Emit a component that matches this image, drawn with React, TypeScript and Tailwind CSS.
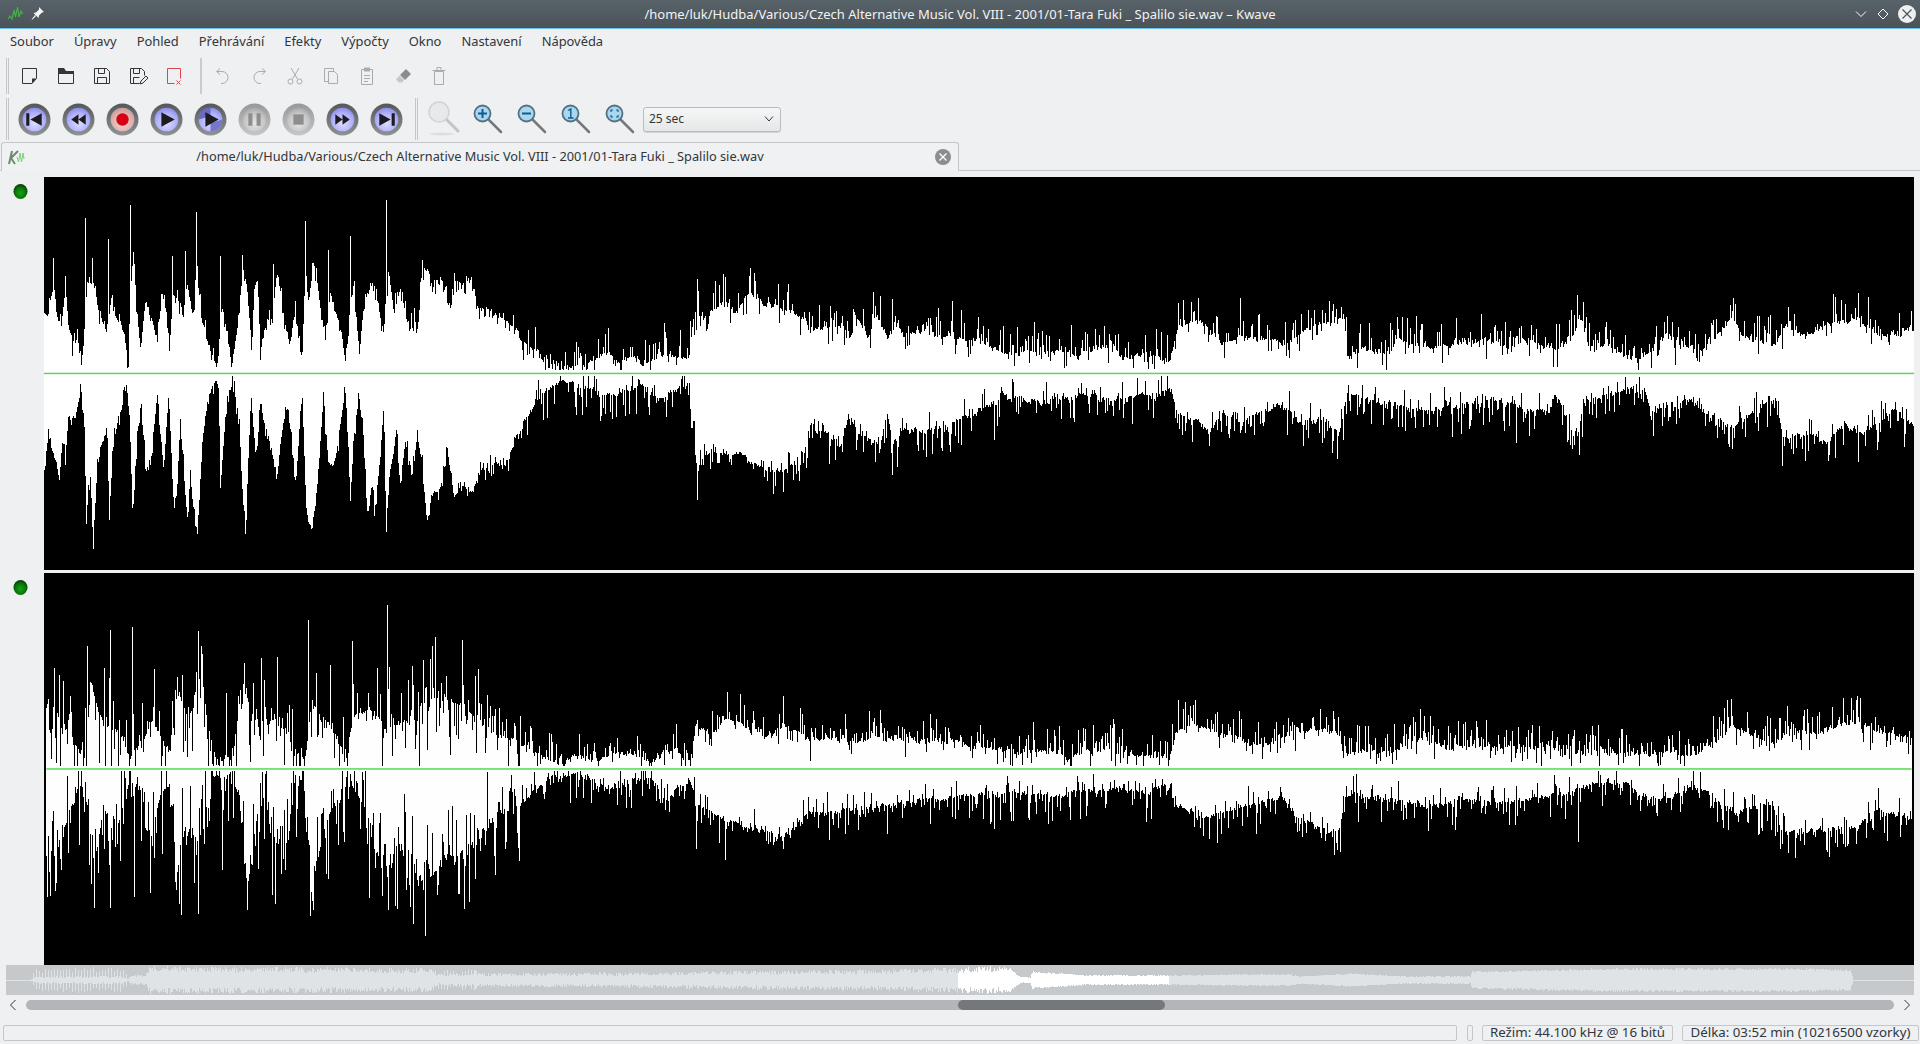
import { useMemo } from "react";

// waveform outline, measured from the picture: x, y pairs per crop
type Crop = { x0: number; sx: number; c: number };
const Z7: Crop = { x0: 0, sx: 1 / 3, c: 608 };
const Z9: Crop = { x0: 400, sx: 760 / 1568, c: 400 };
const Z10: Crop = { x0: 1160, sx: 760 / 1568, c: 400 };
const Z11: Crop = { x0: 0, sx: 960 / 1568, c: 538 };
const Z12: Crop = { x0: 960, sx: 960 / 1568, c: 387 };

const to = (z: Crop, p: number[]) => {
  const out: [number, number][] = [];
  for (let i = 0; i < p.length; i += 2) out.push([z.x0 + p[i] * z.sx, Math.abs(z.c - p[i + 1]) / 3]);
  return out;
};

const ch1Top = [
  ...to(Z7, [132,425,145,430,160,340,170,440,185,470,195,340,205,470,218,530,230,495,245,575,252,470,262,360,275,330,295,420,318,490,330,400,350,440,370,490,384,580,392,300,400,230,408,410,420,530,435,400,447,420,470,500,490,350,508,555,515,370,535,390,545,450,560,340,578,440,590,300,600,400,620,510,640,570,652,585,665,400,680,490,695,580,712,470,728,300,740,350,755,530,762,350,772,330,780,530,800,450,815,450,830,300,850,440,868,520,885,420,905,575,915,300,925,400,940,280,950,350,975,500,990,370,1020,470,1035,570,1050,400,1060,340,1077,555,1090,400,1120,340,1150,490,1165,310,1180,430,1200,350,1220,460,1255,450,1265,290,1285,300,1305,370,1320,320,1350,420,1362,320,1395,370,1400,300,1425,360,1438,440]),
  ...to(Z9, [165,210,200,220,240,270,270,320,280,350,320,360,350,370,380,370,420,330,450,360,480,340,500,365,530,340,560,345,595,350,605,230,625,225,650,200,670,170,690,215,720,150,760,195,800,200,835,225,845,270,880,255,915,250,925,290,945,230,965,280,980,210,1005,290,1020,230,1040,275,1100,270,1130,290,1180,290,1215,310,1250,335,1300,330,1350,330,1400,335,1470,300,1490,350,1540,330,1568,345]),
  ...to(Z10, [20,355,35,270,70,240,100,255,125,310,170,285,220,290,260,310,300,260,350,235,380,235,385,340,420,320,470,335,490,285,540,310,580,310,620,300,670,290,720,320,760,290,810,330,850,290,865,230,885,320,930,310,960,345,1000,340,1050,260,1060,320,1120,320,1140,290,1180,220,1200,280,1270,310,1290,250,1330,280,1380,250,1440,230,1480,280,1510,280,1555,260]),
];
const ch1Bottom = [
  ...to(Z7, [132,910,142,800,165,870,178,910,187,800,195,870,205,730,225,750,243,650,252,770,258,1030,270,930,278,1135,290,900,305,810,320,760,327,1050,335,850,355,750,380,640,390,800,398,1060,405,850,420,690,435,850,450,900,470,670,490,900,505,660,520,1020,530,960,540,750,560,1050,570,920,590,1110,605,820,620,700,640,640,655,640,660,950,675,740,695,640,715,730,730,1040,737,1110,745,830,752,680,768,880,780,700,800,780,830,920,845,780,862,690,887,940,905,650,918,1020,935,1075,950,950,970,680,985,890,1005,860,1020,770,1035,655,1050,990,1060,800,1075,660,1090,820,1100,1040,1115,940,1122,1040,1140,850,1150,700,1157,1065,1170,900,1190,770,1198,960,1215,810,1235,910,1250,790,1265,870,1280,1060,1295,970,1320,950,1340,840,1362,980,1380,940,1400,950,1420,960,1438,910]),
  ...to(Z9, [180,680,220,670,240,590,270,520,285,480,320,440,350,430,380,450,420,480,450,470,500,440,540,490,560,470,590,450,605,540,612,700,640,640,670,660,700,650,740,690,770,700,805,690,835,640,845,560,880,590,910,630,925,530,950,600,990,620,1005,530,1015,620,1040,580,1100,580,1150,550,1200,520,1230,500,1240,470,1300,490,1350,490,1400,470,1470,490,1530,470,1568,470]),
  ...to(Z10, [22,450,35,540,60,540,100,580,130,530,170,550,210,530,250,500,290,560,330,540,370,590,385,470,430,490,500,510,560,520,610,510,650,500,700,490,740,510,800,530,815,470,860,600,875,490,920,480,960,450,1000,460,1010,520,1060,500,1090,490,1130,530,1180,570,1230,520,1270,490,1285,600,1330,590,1375,620,1410,560,1440,590,1500,540,1515,510,1555,570]),
];
const ch2Top = [
  ...to(Z11, [72,340,95,390,115,470,135,505,145,290,165,400,190,430,208,505,225,470,245,390,272,490,285,320,305,380,325,240,340,480,358,510,380,490,395,300,420,420,450,380,470,460,495,505,505,330,530,400,560,490,575,380,600,360,625,410,660,400,690,340,720,320,750,340,790,410,820,440,860,460,885,495,915,510,935,490,975,500,1000,480,1030,490,1060,510,1085,470,1125,505,1135,400,1160,420,1190,380,1250,430,1280,400,1320,440,1380,450,1430,440,1500,445,1568,450]),
  ...to(Z12, [50,320,100,330,150,320,175,350,210,320,250,330,300,340,345,340,352,270,385,240,420,270,440,280,480,310,520,290,570,260,625,270,633,330,700,325,760,280,800,320,860,310,910,310,960,310,1000,340,1050,320,1090,340,1150,330,1200,340,1240,290,1260,250,1310,290,1335,310,1350,280,1420,260,1465,230,1500,270,1555,280]),
];
const ch2Bottom = [
  ...to(Z11, [72,770,85,800,100,740,118,620,133,575,150,830,165,660,190,700,208,570,225,600,240,780,258,620,273,585,285,850,300,700,320,760,345,570,375,570,390,640,400,900,420,620,450,780,470,590,492,580,505,870,530,690,565,580,590,650,610,790,630,800,660,750,690,900,720,810,760,780,810,680,860,630,885,590,915,570,960,570,990,610,1060,570,1085,640,1125,580,1135,650,1180,700,1240,730,1280,750,1320,680,1400,670,1480,650,1568,630]),
  ...to(Z12, [50,470,100,470,150,480,200,460,250,455,300,470,345,440,355,510,400,550,440,520,480,510,530,480,555,550,620,590,632,470,700,490,760,510,820,490,900,500,1000,470,1030,440,1090,435,1115,480,1160,490,1200,450,1250,500,1270,530,1330,500,1345,590,1410,580,1470,570,1500,520,1555,550]),
];

const spikes = {
  ch1Top: [
    ...to(Z7, [160,262,255,142,275,262,325,205,391,105,517,258,556,243,589,126,660,258,727,255,820,280,916,153,985,240,1051,198,1157,90]),
    ...to(Z9, [45,70,544,250,612,118,670,112,722,85,975,157,1015,178,1138,183]),
    ...to(Z10, [38,190,78,175,166,175,861,165,1182,175,1392,172]),
  ],
  ch1Bottom: [
    ...to(Z9, [55,810,612,780,770,740,1015,705,1225,600]),
    ...to(Z10, [102,618,354,640,735,610,865,645,1180,628,1283,678,1378,665,1441,668]),
  ],
  ch2Top: [
    ...to(Z11, [85,235,139,170,177,120,212,112,320,124,396,220,499,90,536,225,572,155,629,45,689,210,727,260,1279,320]),
    ...to(Z12, [120,247,250,238,357,180,386,180,760,228,1262,178,1428,200,1467,180]),
  ],
  ch2Bottom: [
    ...to(Z11, [151,958,177,958,216,925,283,880,320,975,360,845,400,945,505,910,630,965,690,905,1135,780,1182,815,1279,780]),
    ...to(Z12, [55,570,150,545,205,530,408,600,622,610,1013,610,1342,630,1417,610]),
  ],
};

const lerp = (pts: [number, number][], x: number) => {
  if (x <= pts[0][0]) return pts[0][1];
  for (let i = 1; i < pts.length; i++) {
    if (x <= pts[i][0]) {
      const [x0, y0] = pts[i - 1];
      const [x1, y1] = pts[i];
      return y0 + ((y1 - y0) * (x - x0)) / (x1 - x0 || 1);
    }
  }
  return pts[pts.length - 1][1];
};

function rng(seed: number) {
  let s = seed;
  return () => {
    s = (s * 1664525 + 1013904223) >>> 0;
    return s / 4294967296;
  };
}

function wavePath(
  top: [number, number][],
  bottom: [number, number][],
  topSpikes: [number, number][],
  bottomSpikes: [number, number][],
  center: number,
  seed: number,
  earlyNoise: number,
) {
  const rand = rng(seed);
  const tops = new Map(topSpikes.map(([x, a]) => [Math.round(x), a]));
  const bots = new Map(bottomSpikes.map(([x, a]) => [Math.round(x), a]));
  let walkT = 0;
  let walkB = 0;
  const side = (x: number, env: [number, number][], s: Map<number, number>, walk: number) => {
    const early = x < 520;
    let a = lerp(env, x) + walk;
    if (early) {
      a += Math.pow(rand(), 6) * earlyNoise - Math.pow(rand(), 6) * earlyNoise * 0.9;
    } else {
      a += Math.pow(rand(), 6) * 30 - Math.pow(rand(), 10) * 20 - 3;
    }
    const sp = s.get(x);
    if (sp) a = Math.max(a, sp);
    return Math.max(3, a);
  };
  let d = "";
  for (let x = 44; x < 1914; x++) {
    walkT = walkT * 0.72 + (rand() - 0.5) * 3.5;
    walkB = walkB * 0.72 + (rand() - 0.5) * 3.5;
    const t = side(x, top, tops, walkT);
    const b = side(x, bottom, bots, walkB);
    d += `M${x - 44 + 0.5} ${Math.round(center - t)}V${Math.round(center + b)}`;
  }
  return d;
}

const overviewEnv: [number, number][] = [
  [0,1],[30,1],[35,12],[120,14],[128,5],[145,5],[149,14],[300,13],[430,12],[435,10],[475,11],[478,7],[640,8],[700,9],[800,10],[880,11],[958,13],[990,14],[1010,12],[1020,3],[1030,3],[1032,9],[1060,7],[1090,5],[1170,5],[1250,6],[1290,6],[1300,4],[1350,7],[1400,4],[1470,4],[1472,9],[1520,10],[1600,12],[1800,12],[1850,11],[1853,1],[1914,1],
];

function overviewPath(from: number, to_: number) {
  const rand = rng(77);
  let d = "";
  for (let x = 6; x < 1914; x++) {
    const env = lerp(overviewEnv, x);
    const comb = x < 130 ? (x % 3 === 0 ? 1 : 0.3) : x > 433 && x < 475 ? (x % 3 === 0 ? 1 : 0.6) : 1;
    const rag = x < 1000 ? 0.45 : 0.2;
    const thin = env <= 1.5;
    const t = thin ? 0.5 : env * comb * (1 - rag + rag * rand());
    const b = thin ? 0.5 : env * comb * (1 - rag + rag * rand());
    if (x >= from && x < to_) d += `M${x - 6 + 0.5} ${(15 - t).toFixed(1)}V${(15 + b).toFixed(1)}`;
  }
  return d;
}

function Channel({ d }: { d: string }) {
  return (
    <svg width="1870" height="100%" viewBox="0 0 1870 393" className="block h-full">
      <path d={d} stroke="#fff" strokeWidth="1" shapeRendering="crispEdges" fill="none" />
      <rect x="0" y="195.700" width="1870" height="1.500" fill="#58d858" />
    </svg>
  );
}

function Led() {
  return (
    <svg width="15" height="15" viewBox="0 0 15 15">
      <defs>
        <radialGradient id="led" cx="50%" cy="60%" r="60%">
          <stop offset="0" stopColor="#14a414" />
          <stop offset="0.6" stopColor="#0a760a" />
          <stop offset="1" stopColor="#053605" />
        </radialGradient>
      </defs>
      <ellipse cx="7.500" cy="7.500" rx="7" ry="7.500" fill="url(#led)" />
    </svg>
  );
}

const ink = "#31363b";
const off = "#a9acae";

function Ico({ children }: { children: React.ReactNode }) {
  return (
    <div className="flex h-9 w-9 items-center justify-center">
      <svg width="20" height="20" viewBox="0 0 20 20" fill="none" strokeWidth="1">
        {children}
      </svg>
    </div>
  );
}

function Floppy() {
  return (
    <>
      <path d="M2.500 2.500h12l3 3v12h-15z" stroke={ink} />
      <path d="M6.500 2.500v5h6v-5M5.500 17.500v-6h9v6" stroke={ink} />
    </>
  );
}

function MainBar() {
  return (
    <div className="flex h-[41px] items-center pl-[6px]">
      <div className="mr-[3px] h-9 w-[3px] border-x border-[#c4c6c8]" />
      <Ico>
        <path d="M2.500 2.500h14v10l-4.500 5h-9.500z" stroke={ink} />
        <path d="M16.500 12.500h-4.500v5z" fill={ink} />
      </Ico>
      <Ico>
        <path d="M2 2h6l2 3h8v3h-16z" fill={ink} />
        <path d="M2.500 7.500h15v10h-15z" stroke={ink} />
      </Ico>
      <Ico>
        <Floppy />
      </Ico>
      <Ico>
        <path d="M11.500 17.500h-9v-15h11l3 3v4" stroke={ink} />
        <path d="M5.500 2.500v5h6v-5M5.500 17.500v-6h6" stroke={ink} />
        <path d="M12 18l1-3 5-5 2 2-5 5z" stroke={ink} />
      </Ico>
      <Ico>
        <path d="M3.500 17.500v-15h13v10M3.500 17.500h7" stroke="#da4453" />
        <path d="M12.500 14.500l4 4M16.500 14.500l-4 4" stroke="#da4453" />
      </Ico>
      <div className="ml-[8px] mr-[3px] h-9 w-[2px] bg-[#c9cbcd]" />
      <Ico>
        <path d="M7 2.500l-3.500 3 3.500 3M4 5.500h5a6 6 0 0 1 0 12h-1" stroke={off} />
      </Ico>
      <Ico>
        <path d="M13 2.500l3.500 3-3.500 3M16 5.500h-5a6 6 0 0 0 0 12h1" stroke={off} />
      </Ico>
      <Ico>
        <path d="M6 2l6.500 11M14 2l-6.500 11" stroke={off} />
        <circle cx="5.500" cy="15.500" r="2.500" stroke={off} />
        <circle cx="14.500" cy="15.500" r="2.500" stroke={off} />
      </Ico>
      <Ico>
        <path d="M3.500 2.500h9v13h-9z" stroke={off} />
        <path d="M7.500 5.500h6l3 3v9h-9z" fill="#eff0f1" stroke={off} />
      </Ico>
      <Ico>
        <path d="M4.500 3.500h11v15h-11z" stroke={off} />
        <path d="M7 1.500h6v4h-6z" fill={off} />
        <path d="M7 9.500h6M7 12.500h6M7 15.500h4" stroke={off} />
      </Ico>
      <Ico>
        <path d="M13 3l5 5-6 6-5-5z" fill="#8a8d90" />
        <path d="M6.500 9.500l4.500 4.500-2 2.500h-3l-3-3z" fill="#c6c8ca" />
      </Ico>
      <Ico>
        <path d="M5.500 5.500h9v13h-9zM3.500 4.500h13M8 4v-2.500h4v2.500" stroke={off} />
      </Ico>
    </div>
  );
}

type Tone = "blue" | "red" | "gray";

function Media({ tone, children }: { tone: Tone; children: React.ReactNode }) {
  return (
    <div className="flex w-[44px] items-center justify-center">
      <svg width="33" height="33" viewBox="0 0 32 32">
        <defs>
          <linearGradient id={`ring-${tone}`} x1="0" y1="0" x2="0" y2="1">
            <stop offset="0" stopColor={tone === "gray" ? "#96989a" : "#55585b"} />
            <stop offset="1" stopColor={tone === "gray" ? "#c6c7c9" : "#909396"} />
          </linearGradient>
          <radialGradient id={`face-${tone}`} cx="50%" cy="65%" r="65%">
            <stop offset="0" stopColor={tone === "blue" ? "#dedeff" : tone === "red" ? "#f0d4d2" : "#e6e6e6"} />
            <stop offset="0.65" stopColor={tone === "blue" ? "#b0b0fc" : tone === "red" ? "#dfb0ac" : "#c6c6c6"} />
            <stop offset="1" stopColor={tone === "blue" ? "#8a8ae6" : tone === "red" ? "#c49c98" : "#a6a6a6"} />
          </radialGradient>
        </defs>
        <circle cx="16" cy="16" r="15.500" fill={`url(#ring-${tone})`} />
        <circle cx="16" cy="16" r="11.500" fill={`url(#face-${tone})`} />
        {children}
      </svg>
    </div>
  );
}

function Lens({ icon, disabled }: { icon?: React.ReactNode; disabled?: boolean }) {
  return (
    <div className="flex w-[44px] items-center justify-center">
      {disabled ? (
        <svg width="32" height="36" viewBox="0 0 32 36" fill="none">
          <ellipse cx="14" cy="33" rx="12" ry="1.500" fill="#dcddde" />
          <path d="M18 18l12 12" stroke="#c4c5c7" strokeWidth="3" strokeLinecap="round" />
          <circle cx="11" cy="11" r="10" fill="#e8e9ea" stroke="#d2d3d5" strokeWidth="1.500" />
        </svg>
      ) : (
        <svg width="30" height="30" viewBox="0 0 30 30" fill="none">
          <path d="M15 15l13 13" stroke="#74797d" strokeWidth="2.500" strokeLinecap="round" />
          <circle cx="9.500" cy="9.500" r="8" fill="#a8d8f0" stroke="#55707f" strokeWidth="1.800" />
          {icon}
        </svg>
      )}
    </div>
  );
}

const blueInk = "#145a90";

function TransportBar() {
  return (
    <div className="flex h-[46px] items-center pl-[6px]">
      <div className="mr-[1px] h-[42px] w-[3px] border-x border-[#c4c6c8]" />
      <div className="ml-[2px] flex">
        <Media tone="blue">
          <path d="M8 10h3v12h-3zM23 10v12l-11-6z" fill="#1c1c20" />
        </Media>
        <Media tone="blue">
          <path d="M16 11v10l-7-5zM23 11v10l-7-5z" fill="#1c1c20" />
        </Media>
        <Media tone="red">
          <circle cx="16" cy="16" r="6" fill="#d80012" />
        </Media>
        <Media tone="blue">
          <path d="M11 9l13 7-13 7z" fill="#1c1c20" />
        </Media>
        <Media tone="blue">
          <path d="M4.500 16a11.500 11.500 0 0 1 11.500-11.500v8z" fill="#6a6ac0" />
          <path d="M27.500 16a11.500 11.500 0 0 1-11.500 11.500v-8z" fill="#7676cc" />
          <path d="M11 9l13 7-13 7z" fill="#1c1c20" />
        </Media>
        <Media tone="gray">
          <path d="M10 10h4v12h-4zM18 10h4v12h-4z" fill="#8e8e8e" />
        </Media>
        <Media tone="gray">
          <path d="M11 11h10v10h-10z" fill="#8e8e8e" />
        </Media>
        <Media tone="blue">
          <path d="M9 11v10l7-5zM16 11v10l7-5z" fill="#1c1c20" />
        </Media>
        <Media tone="blue">
          <path d="M9 10v12l11-6zM21 10h3v12h-3z" fill="#1c1c20" />
        </Media>
      </div>
      <div className="ml-[7px] mr-[4px] h-[42px] w-[3px] border-x border-[#c4c6c8]" />
      <div className="flex">
        <Lens disabled />
        <Lens icon={<path d="M5 9.500h9M9.500 5v9" stroke={blueInk} strokeWidth="2" />} />
        <Lens icon={<path d="M5 9.500h9" stroke={blueInk} strokeWidth="2" />} />
        <Lens icon={<path d="M7 6.500l2.800-1.500v9M7 14h5.500" stroke={blueInk} strokeWidth="1.400" />} />
        <Lens icon={<path d="M6 8v-2h2M11 6h2v2M13 11v2h-2M8 13h-2v-2" stroke={blueInk} strokeWidth="1.200" />} />
      </div>
      <div className="ml-[1px] flex h-[25px] w-[138px] items-center justify-between rounded-[3px] border border-[#b9bbbd] bg-gradient-to-b from-[#f5f6f6] to-[#e6e7e8] pl-[5px] pr-[6px] text-[12px] text-[#31363b] shadow-[0_1px_0_#d4d5d6]">
        <span>25 sec</span>
        <svg width="10" height="6" viewBox="0 0 10 6" fill="none">
          <path d="M1 .5l4 4.500 4-4.500" stroke={ink} />
        </svg>
      </div>
    </div>
  );
}

function KwaveMark({ dark }: { dark?: boolean }) {
  return (
    <svg width="17" height="17" viewBox="0 0 17 17" fill="none">
      {dark ? (
        <path d="M1 14l2-3 2 3 2-9 1.500 7 2-10 1.500 10 2-6 1.500 3" stroke="#46b04a" strokeWidth="1.200" />
      ) : (
        <>
          <path d="M4 2l-3 13M10 2l-7 7 4 6" stroke="#6e8a6e" strokeWidth="2" />
          <path d="M9 8l1.500 5 1.500-9 1.500 9 1.500-9 1 6" stroke="#7cd07c" strokeWidth="1" />
        </>
      )}
    </svg>
  );
}

const menus = ["Soubor", "Úpravy", "Pohled", "Přehrávání", "Efekty", "Výpočty", "Okno", "Nastavení", "Nápověda"];

export default function App() {
  const { c1, c2, ovLight, ovWhite } = useMemo(
    () => ({
      c1: wavePath(ch1Top, ch1Bottom, spikes.ch1Top, spikes.ch1Bottom, 196, 11, 14),
      c2: wavePath(ch2Top, ch2Bottom, spikes.ch2Top, spikes.ch2Bottom, 196, 29, 70),
      ovLight: overviewPath(6, 1914),
      ovWhite: overviewPath(958, 1169),
    }),
    [],
  );

  return (
    <div className="flex h-[1044px] w-[1920px] flex-col overflow-hidden bg-[#eff0f1] font-['Noto_Sans',sans-serif] text-[12px] text-[#31363b]">
      {/* window title */}
      <div className="relative flex h-[29px] shrink-0 items-center justify-center border-b border-[#6cc0e6] bg-gradient-to-b from-[#586269] to-[#4a5358] pt-px text-[13px] text-[#f2f3f4]">
        <div className="absolute left-[7px] top-[5px] flex items-center gap-[7px]">
          <KwaveMark dark />
          <svg width="13" height="13" viewBox="0 0 13 13">
            <path d="M8 0l5 5-2 .5-3 3-.5 2.500-5-5 2.500-.5 3-3zM4 8l-3.500 4.500 1 0 3.500-3.500z" fill="#f4f5f5" />
          </svg>
        </div>
        <span>/home/luk/Hudba/Various/Czech Alternative Music Vol. VIII - 2001/01-Tara Fuki _ Spalilo sie.wav – Kwave</span>
        <div className="absolute right-[4px] top-[5px] flex items-center gap-[8px]">
          <svg width="14" height="14" viewBox="0 0 14 14" fill="none">
            <path d="M2 4.500l5 5 5-5" stroke="#fff" />
          </svg>
          <svg width="14" height="14" viewBox="0 0 14 14" fill="none">
            <path d="M7 2l5 5-5 5-5-5z" stroke="#fff" />
          </svg>
          <svg width="18" height="18" viewBox="0 0 18 18" fill="none">
            <circle cx="9" cy="9" r="9" fill="#eff0f1" />
            <path d="M4.500 4.500l9 9M13.500 4.500l-9 9" stroke="#4a5358" strokeWidth="1.200" />
          </svg>
        </div>
      </div>

      {/* menu */}
      <div className="flex h-[26px] shrink-0 items-center text-[12.900px]">
        {menus.map((m) => (
          <span key={m} className="px-[10px]">
            {m}
          </span>
        ))}
      </div>

      <MainBar />
      <TransportBar />

      {/* file tab */}
      <div className="flex h-[29px] shrink-0 items-stretch border-b border-[#c4c6c8] pl-px">
        <div className="-mb-px flex w-[958px] items-center rounded-t-[3px] border-x border-t border-[#c4c6c8] border-b-[#eff0f1] bg-[#f0f1f2]">
          <div className="w-[30px] pl-[6px]">
            <KwaveMark />
          </div>
          <div className="flex-1 text-center text-[12.750px]">/home/luk/Hudba/Various/Czech Alternative Music Vol. VIII - 2001/01-Tara Fuki _ Spalilo sie.wav</div>
          <div className="flex w-[30px] justify-center">
            <svg width="16" height="16" viewBox="0 0 16 16" fill="none">
              <circle cx="8" cy="8" r="8" fill="#8b8d8f" />
              <path d="M4.500 4.500l7 7M11.500 4.500l-7 7" stroke="#fff" strokeWidth="1.300" />
            </svg>
          </div>
        </div>
      </div>

      {/* signal channels */}
      <div className="flex h-[794px] shrink-0 flex-col pt-[6px]">
        <div className="flex h-[393px]">
          <div className="flex w-[44px] justify-center pt-[7px] pr-[3px]">
            <div className="h-[15px]">
              <Led />
            </div>
          </div>
          <div className="w-[1870px] bg-black">
            <Channel d={c1} />
          </div>
        </div>
        <div className="flex h-[395px] pt-[3px]">
          <div className="flex w-[44px] justify-center pt-[7px] pr-[3px]">
            <div className="h-[15px]">
              <Led />
            </div>
          </div>
          <div className="w-[1870px] bg-black">
            <Channel d={c2} />
          </div>
        </div>
      </div>

      {/* overview */}
      <div className="mx-[6px] h-[30px] shrink-0 bg-[#c6c9cb]">
        <svg width="1908" height="30" viewBox="0 0 1908 30" className="block">
          <path d={ovLight} stroke="#e0e3e5" fill="none" shapeRendering="crispEdges" />
          <path d={ovWhite} stroke="#fff" fill="none" shapeRendering="crispEdges" />
        </svg>
      </div>

      {/* scrollbar */}
      <div className="mt-[5px] flex h-[10px] shrink-0 items-center">
        <div className="flex w-[26px] justify-center">
          <svg width="8" height="12" viewBox="0 0 8 12" fill="none">
            <path d="M6.500 1l-5 5 5 5" stroke={ink} />
          </svg>
        </div>
        <div className="h-[10px] w-[1868px] rounded-full bg-[#b4b5b8]">
          <div className="ml-[932px] h-[10px] w-[207px] rounded-full bg-[#75787b]" />
        </div>
        <div className="flex w-[26px] justify-center">
          <svg width="8" height="12" viewBox="0 0 8 12" fill="none">
            <path d="M1.500 1l5 5-5 5" stroke={ink} />
          </svg>
        </div>
      </div>

      {/* status bar */}
      <div className="mt-[15px] flex h-[16px] shrink-0 pl-[3px] text-[13.300px]">
        <div className="w-[1454px] rounded-[2px] border border-[#c4c6c8]" />
        <div className="ml-[10px] w-[6px] rounded-[2px] border border-[#c4c6c8]" />
        <div className="ml-[9px] flex w-[191px] items-center justify-center whitespace-nowrap rounded-[2px] border border-[#c4c6c8]">Režim: 44.100 kHz @ 16 bitů</div>
        <div className="ml-[9px] flex w-[237px] items-center justify-center whitespace-nowrap rounded-[2px] border border-[#c4c6c8]">Délka: 03:52 min (10216500 vzorky)</div>
      </div>
    </div>
  );
}
